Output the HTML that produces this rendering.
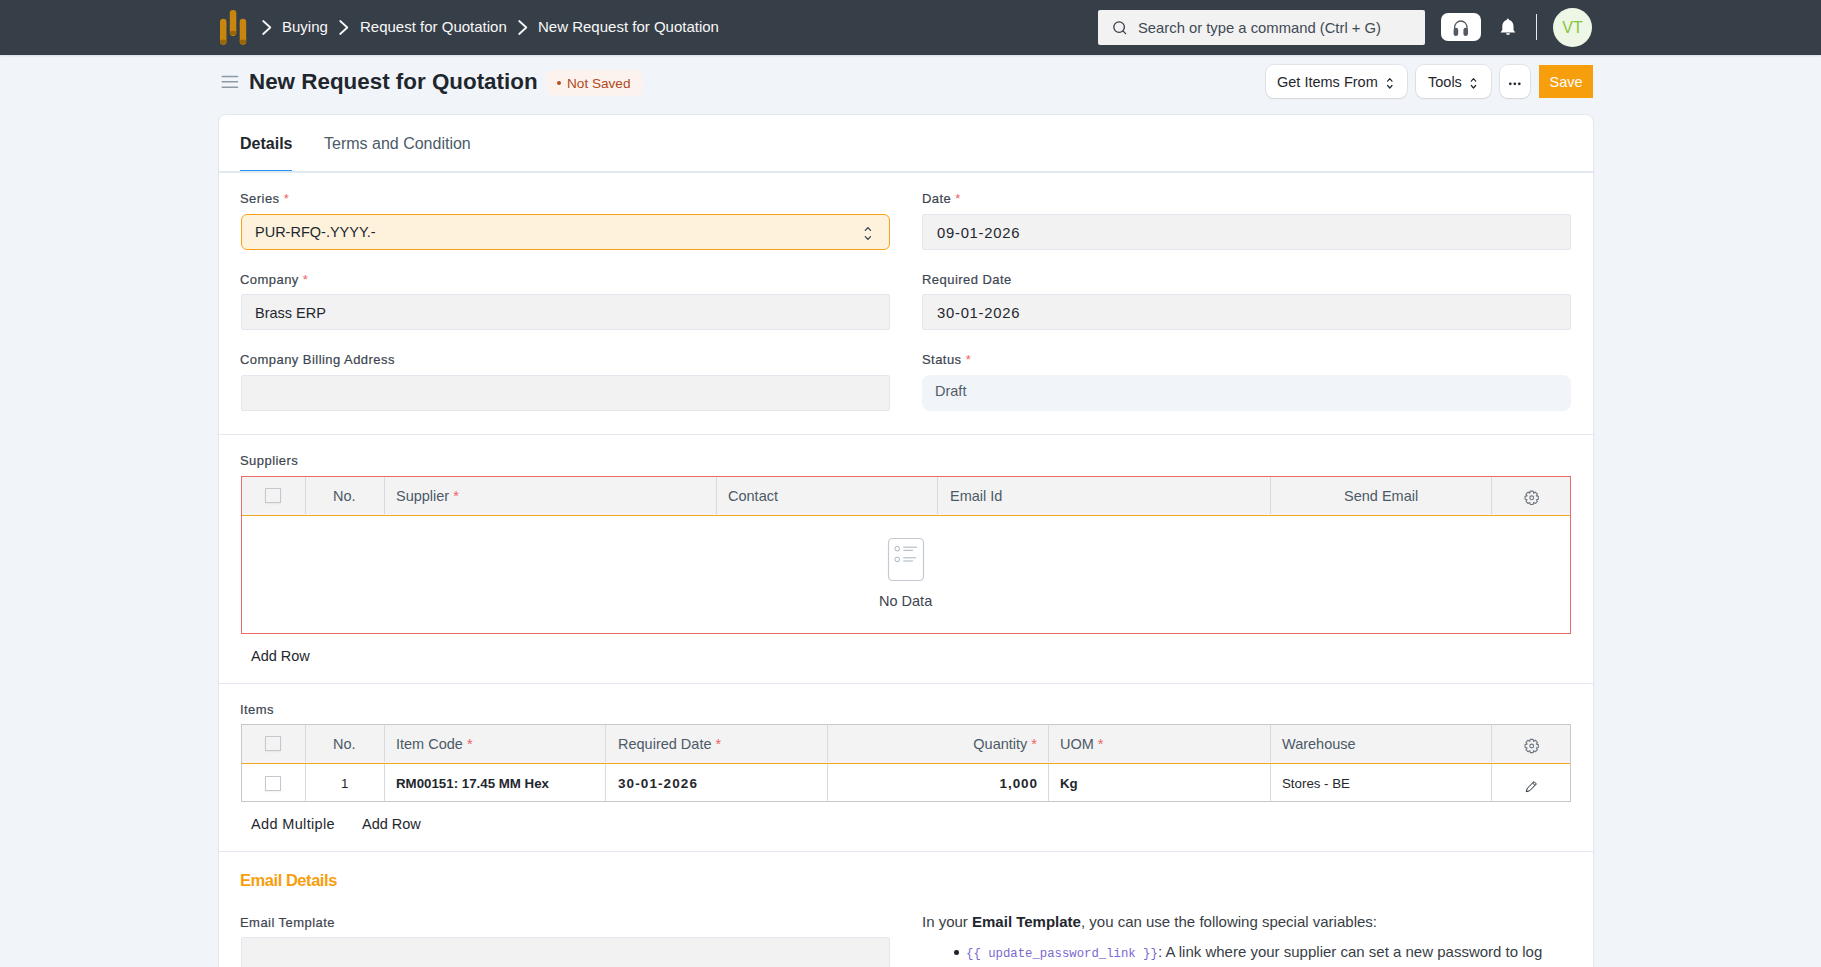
<!DOCTYPE html>
<html><head><meta charset="utf-8">
<style>
*{box-sizing:border-box;margin:0;padding:0}
html,body{width:1821px;height:967px;overflow:hidden}
body{background:#f1f4f8;font-family:"Liberation Sans",sans-serif;color:#1f272e;position:relative}
.abs{position:absolute}
svg{position:absolute;overflow:visible}
.nav{position:absolute;left:0;top:0;width:1821px;height:55px;background:#363f48;box-shadow:0 1px 2px rgba(0,0,0,.1)}
.crumb{position:absolute;top:18px;font-size:15px;color:#f8f8f8;white-space:nowrap;line-height:18px}
.search{position:absolute;left:1098px;top:10px;width:327px;height:35px;background:#f2f2f2;border-radius:2px}
.search span{position:absolute;left:40px;top:9px;font-size:14.8px;color:#3f4a55;white-space:nowrap;line-height:18px}
.hbtn{position:absolute;left:1441px;top:13px;width:40px;height:28px;background:#fff;border-radius:7px}
.avatar{position:absolute;left:1553px;top:8px;width:39px;height:39px;border-radius:50%;background:#eef6e6;color:#86c43a;font-size:16px;text-align:center;line-height:39px}
.title{position:absolute;left:249px;top:68.5px;font-size:22.4px;font-weight:bold;color:#1f272e;white-space:nowrap;line-height:26px}
.pill{position:absolute;left:546px;top:70px;width:97px;height:26px;border-radius:7px;background:#fdf3ee;color:#b0491b;font-size:13.6px;line-height:28px;white-space:nowrap}
.btn{position:absolute;top:65px;height:33px;background:#fff;border-radius:8px;box-shadow:0 0 0 1px rgba(0,0,0,.06),0 1px 2px rgba(0,0,0,.08);font-size:14.5px;color:#1f272e;line-height:35px;white-space:nowrap}
.save{position:absolute;left:1539px;top:65px;width:54px;height:33px;background:#f79e0c;color:#fff;font-size:14.5px;line-height:35px;text-align:center}
.card{position:absolute;left:218px;top:114px;width:1376px;height:900px;background:#fff;border-radius:8px;border:1px solid #e4e8ee;box-shadow:0 1px 2px rgba(0,0,0,.04)}
.tab{position:absolute;top:134.5px;font-size:16px;white-space:nowrap;line-height:18px}
.lbl{position:absolute;font-size:13px;letter-spacing:0.45px;color:#3d4550;white-space:nowrap;line-height:14px;-webkit-text-stroke:0.2px #3d4550}
.req{color:#ec6464;-webkit-text-stroke:0}
.inp{position:absolute;height:36px;background:#f2f2f2;border:1px solid #e3e8ef;border-radius:2px;font-size:14.5px;line-height:36px;padding-left:13px;color:#1f272e;white-space:nowrap}
.hr{position:absolute;left:219px;width:1374px;height:1px;background:#e3e9f0}
.grid{position:absolute;border:1px solid #c8c8c8}
.ghead{position:absolute;left:0;top:0;width:100%;height:39px;background:#f3f3f3;border-bottom:1px solid #f5a623}
.col{position:absolute;top:0;width:1px;background:#d4dbe2}
.th{position:absolute;top:0;height:38px;line-height:38px;font-size:14.5px;color:#4c5a67;white-space:nowrap}
.td{position:absolute;height:37px;line-height:39px;font-size:13.3px;color:#1f272e;white-space:nowrap}
.chk{position:absolute;width:16px;height:15px;border:1px solid #c2c8cf;border-radius:0.5px;background:transparent;box-shadow:0 1px 2px rgba(0,0,0,.06)}
.num{letter-spacing:0.75px;font-size:14.8px}
.numb{letter-spacing:1.1px;font-size:13.5px}
.link{position:absolute;font-size:14.5px;color:#1f272e;white-space:nowrap;line-height:18px}
</style></head><body>
<div class="nav"></div>
<!-- logo -->
<svg style="left:0;top:0" width="1" height="1">
  <g fill="#c8860f">
    <rect x="220" y="18.8" width="6.5" height="26" rx="3.25"/>
    <rect x="229.8" y="9.9" width="6.5" height="26" rx="3.25"/>
    <rect x="239.7" y="18.8" width="6.5" height="26" rx="3.25"/>
  </g>
  <g fill="#9a6508">
    <ellipse cx="223.25" cy="41.8" rx="3.25" ry="2.2"/>
    <ellipse cx="233.05" cy="32.9" rx="3.25" ry="2.2"/>
    <ellipse cx="242.95" cy="41.8" rx="3.25" ry="2.2"/>
  </g>
  <g fill="none" stroke="#f8f8f8" stroke-width="1.8" stroke-linecap="round" stroke-linejoin="round">
    <path d="M263.2 21 L270.3 27.5 L263.2 34"/>
    <path d="M340.2 21 L347.3 27.5 L340.2 34"/>
    <path d="M519.2 21 L526.3 27.5 L519.2 34"/>
  </g>
</svg>
<div class="crumb" style="left:282px">Buying</div>
<div class="crumb" style="left:360px">Request for Quotation</div>
<div class="crumb" style="left:538px">New Request for Quotation</div>
<div class="search"><span>Search or type a command (Ctrl + G)</span></div>
<svg style="left:0;top:0" width="1" height="1">
  <g fill="none" stroke="#343c45" stroke-width="1.3" stroke-linecap="round">
    <circle cx="1119.1" cy="27.1" r="5.3"/>
    <path d="M1122.9 30.9 L1125.6 33.6"/>
  </g>
</svg>
<div class="hbtn"></div>
<svg style="left:0;top:0" width="1" height="1">
  <path d="M1454.6 30.5 V27.5 a6.2 6.5 0 0 1 12.4 0 V30.5" fill="none" stroke="#555a60" stroke-width="1.3"/>
  <rect x="1453.6" y="27.8" width="4.6" height="8.2" rx="2.3" fill="#555a60"/>
  <rect x="1463.4" y="27.8" width="4.6" height="8.2" rx="2.3" fill="#555a60"/>
  <!-- bell -->
  <path d="M1507.9 18.2 l1.3 1.7 c2.6 0.7 4.3 3 4.3 6 v4.2 l1.8 2.3 h-14.8 l1.8 -2.3 v-4.2 c0 -3 1.7 -5.3 4.3 -6 z" fill="#fff"/>
  <path d="M1506 33.3 h4 a2 1.6 0 0 1 -4 0z" fill="#fff"/>
  <rect x="1536" y="14" width="1" height="26" fill="#e8e8e8"/>
</svg>
<div class="avatar">VT</div>

<!-- page head -->
<svg style="left:0;top:0" width="1" height="1">
  <g stroke="#8d99a6" stroke-width="1.5" stroke-linecap="round">
    <path d="M222.2 76.5 H237.5 M222.2 81.8 H237.5 M222.2 87.2 H237.5"/>
  </g>
</svg>
<div class="title">New Request for Quotation</div>
<div class="pill"><span style="position:absolute;left:11px;top:11px;width:4.2px;height:4.2px;border-radius:50%;background:#b4501c"></span><span style="position:absolute;left:21px">Not Saved</span></div>
<div class="btn" style="left:1266px;width:141px;padding-left:11px">Get Items From</div>
<div class="btn" style="left:1416px;width:75px;padding-left:12px">Tools</div>
<div class="btn" style="left:1500px;width:30px"></div>
<div class="save">Save</div>
<svg style="left:0;top:0" width="1" height="1">
  <g fill="none" stroke="#1f272e" stroke-width="1.2" stroke-linecap="round" stroke-linejoin="round">
    <path d="M1387.6 81.2 L1389.8 78.7 L1392 81.2 M1387.6 85.5 L1389.8 88 L1392 85.5"/>
    <path d="M1471.3 81.2 L1473.5 78.7 L1475.7 81.2 M1471.3 85.5 L1473.5 88 L1475.7 85.5"/>
  </g>
  <g fill="#1f272e"><circle cx="1510.3" cy="83.8" r="1.35"/><circle cx="1514.8" cy="83.8" r="1.35"/><circle cx="1519.3" cy="83.8" r="1.35"/>
  </g>
</svg>

<div class="card"></div>
<div class="tab" style="left:240px;font-weight:bold">Details</div>
<div class="tab" style="left:324px;color:#4c5a67">Terms and Condition</div>
<div class="hr" style="top:171px;height:2px"></div>
<div class="abs" style="left:240px;top:170px;width:52px;height:1px;background:#2490ef"></div>

<div class="lbl" style="left:240px;top:192px">Series <span class="req">*</span></div>
<div class="inp" style="left:241px;top:214px;width:649px;background:#fef2dd;border:1.5px solid #fca217;border-radius:6px;line-height:35px;padding-left:13px">PUR-RFQ-.YYYY.-</div>
<svg style="left:0;top:0" width="1" height="1">
  <g fill="none" stroke="#3b4754" stroke-width="1.3" stroke-linecap="round" stroke-linejoin="round">
    <path d="M865.3 230.4 L867.9 227.6 L870.5 230.4 M865.3 236.6 L867.9 239.4 L870.5 236.6"/>
  </g>
</svg>
<div class="lbl" style="left:922px;top:192px">Date <span class="req">*</span></div>
<div class="inp" style="left:922px;top:214px;width:649px;padding-left:14px"><span class="num">09-01-2026</span></div>

<div class="lbl" style="left:240px;top:273px">Company <span class="req">*</span></div>
<div class="inp" style="left:241px;top:294px;width:649px">Brass ERP</div>
<div class="lbl" style="left:922px;top:273px">Required Date</div>
<div class="inp" style="left:922px;top:294px;width:649px;padding-left:14px"><span class="num">30-01-2026</span></div>

<div class="lbl" style="left:240px;top:353px">Company Billing Address</div>
<div class="inp" style="left:241px;top:375px;width:649px"></div>
<div class="lbl" style="left:922px;top:353px">Status <span class="req">*</span></div>
<div class="inp" style="left:922px;top:375px;width:649px;background:#f1f4f8;border:none;border-radius:8px;color:#525d68;line-height:33px">Draft</div>

<div class="hr" style="top:434px"></div>

<!-- Suppliers -->
<div class="lbl" style="left:240px;top:454px">Suppliers</div>
<div class="grid" style="left:241px;top:476px;width:1330px;height:158px;border-color:#ec6a6a">
  <div class="ghead"></div>
  <div class="col" style="left:63px;height:37px"></div>
  <div class="col" style="left:142px;height:37px"></div>
  <div class="col" style="left:474px;height:37px"></div>
  <div class="col" style="left:695px;height:37px"></div>
  <div class="col" style="left:1028px;height:37px"></div>
  <div class="col" style="left:1249px;height:37px"></div>
  <div class="chk" style="left:23px;top:11px"></div>
  <div class="th" style="left:91px">No.</div>
  <div class="th" style="left:154px">Supplier <span class="req">*</span></div>
  <div class="th" style="left:486px">Contact</div>
  <div class="th" style="left:708px">Email Id</div>
  <div class="th" style="left:1102px">Send Email</div>
</div>
<svg style="left:0;top:0" width="1" height="1">
  <rect x="888.5" y="538.5" width="35" height="42" rx="4" fill="none" stroke="#c3cad1" stroke-width="1.2"/>
  <g fill="none" stroke="#a9b3bc" stroke-width="1">
    <circle cx="897.2" cy="548.7" r="2.3"/>
    <circle cx="897.2" cy="559.4" r="2.3"/>
  </g>
  <g stroke="#a9b3bc" stroke-width="1">
    <path d="M903.3 547.2 H917 M903.3 550.3 H913 M903.3 557.8 H916 M903.3 561 H913"/>
  </g>
</svg>
<div class="link" style="left:879px;top:592px;color:#3d4550">No Data</div>
<div class="link" style="left:251px;top:647px">Add Row</div>

<div class="hr" style="top:683px"></div>

<!-- Items -->
<div class="lbl" style="left:240px;top:703px">Items</div>
<div class="grid" style="left:241px;top:724px;width:1330px;height:78px">
  <div class="ghead"></div>
  <div class="col" style="left:63px;top:0;height:37px"></div>
  <div class="col" style="left:142px;height:37px"></div>
  <div class="col" style="left:363px;height:37px"></div>
  <div class="col" style="left:585px;height:37px"></div>
  <div class="col" style="left:806px;height:37px"></div>
  <div class="col" style="left:1028px;height:37px"></div>
  <div class="col" style="left:1249px;height:37px"></div>
  <div class="col" style="left:63px;top:39px;height:37px"></div>
  <div class="col" style="left:142px;top:39px;height:37px"></div>
  <div class="col" style="left:363px;top:39px;height:37px"></div>
  <div class="col" style="left:585px;top:39px;height:37px"></div>
  <div class="col" style="left:806px;top:39px;height:37px"></div>
  <div class="col" style="left:1028px;top:39px;height:37px"></div>
  <div class="col" style="left:1249px;top:39px;height:37px"></div>
  <div class="chk" style="left:23px;top:11px"></div>
  <div class="th" style="left:91px">No.</div>
  <div class="th" style="left:154px">Item Code <span class="req">*</span></div>
  <div class="th" style="left:376px">Required Date <span class="req">*</span></div>
  <div class="th" style="left:585px;width:210px;text-align:right">Quantity <span class="req">*</span></div>
  <div class="th" style="left:818px">UOM <span class="req">*</span></div>
  <div class="th" style="left:1040px">Warehouse</div>
  <div class="chk" style="left:23px;top:51px"></div>
  <div class="td" style="left:99px;top:39px">1</div>
  <div class="td" style="left:154px;top:39px;font-weight:bold">RM00151: 17.45 MM Hex</div>
  <div class="td" style="left:376px;top:39px;font-weight:bold"><span class="numb">30-01-2026</span></div>
  <div class="td" style="left:585px;top:39px;width:210px;text-align:right;font-weight:bold"><span class="numb" style="letter-spacing:0.9px;margin-right:-0.9px">1,000</span></div>
  <div class="td" style="left:818px;top:39px;font-weight:bold">Kg</div>
  <div class="td" style="left:1040px;top:39px">Stores - BE</div>
</div>
<svg style="left:0;top:0" width="1" height="1">
  <g id="gear" transform="translate(1531.7,497.8)" fill="none" stroke="#6c7680" stroke-width="1.1" stroke-linejoin="round">
    <path d="M4.62 -1.90 L6.64 -1.48 L6.64 1.48 L4.62 1.90 L4.61 1.93 L5.74 3.64 L3.64 5.74 L1.93 4.61 L1.90 4.62 L1.48 6.64 L-1.48 6.64 L-1.90 4.62 L-1.93 4.61 L-3.64 5.74 L-5.74 3.64 L-4.61 1.93 L-4.62 1.90 L-6.64 1.48 L-6.64 -1.48 L-4.62 -1.90 L-4.61 -1.93 L-5.74 -3.64 L-3.64 -5.74 L-1.93 -4.61 L-1.90 -4.62 L-1.48 -6.64 L1.48 -6.64 L1.90 -4.62 L1.93 -4.61 L3.64 -5.74 L5.74 -3.64 L4.61 -1.93Z"/>
    <circle cx="0" cy="0" r="1.9"/>
  </g>
  <use href="#gear" transform="translate(0,248.2)"/>
  <path d="M1526.3 791.7 l0.9 -3.3 l6.8 -6.8 l2.4 2.4 l-6.8 6.8z M1532.6 783 l2.4 2.4" fill="none" stroke="#1f272e" stroke-width="1" stroke-linejoin="round"/>
</svg>
<div class="link" style="left:251px;top:815px;letter-spacing:0.35px">Add Multiple</div>
<div class="link" style="left:362px;top:815px">Add Row</div>

<div class="hr" style="top:851px"></div>

<div class="abs" style="left:240px;top:870px;font-size:16.5px;letter-spacing:-0.45px;font-weight:bold;color:#f79e0c;white-space:nowrap;line-height:20px">Email Details</div>
<div class="lbl" style="left:240px;top:916px">Email Template</div>
<div class="inp" style="left:241px;top:937px;width:649px;height:40px"></div>

<div class="abs" style="left:922px;top:913px;font-size:15px;color:#383e45;white-space:nowrap;line-height:18px">In your <b style="color:#1f272e">Email Template</b>, you can use the following special variables:</div>
<div class="abs" style="left:954px;top:950px;width:4.5px;height:4.5px;border-radius:50%;background:#1f272e"></div>
<div class="abs" style="left:966px;top:943px;font-size:15px;color:#383e45;white-space:nowrap;line-height:18px"><span style="font-family:'Liberation Mono',monospace;font-size:12.3px;color:#7a68d0">{{ update_password_link }}</span>: A link where your supplier can set a new password to log</div>

</body></html>
